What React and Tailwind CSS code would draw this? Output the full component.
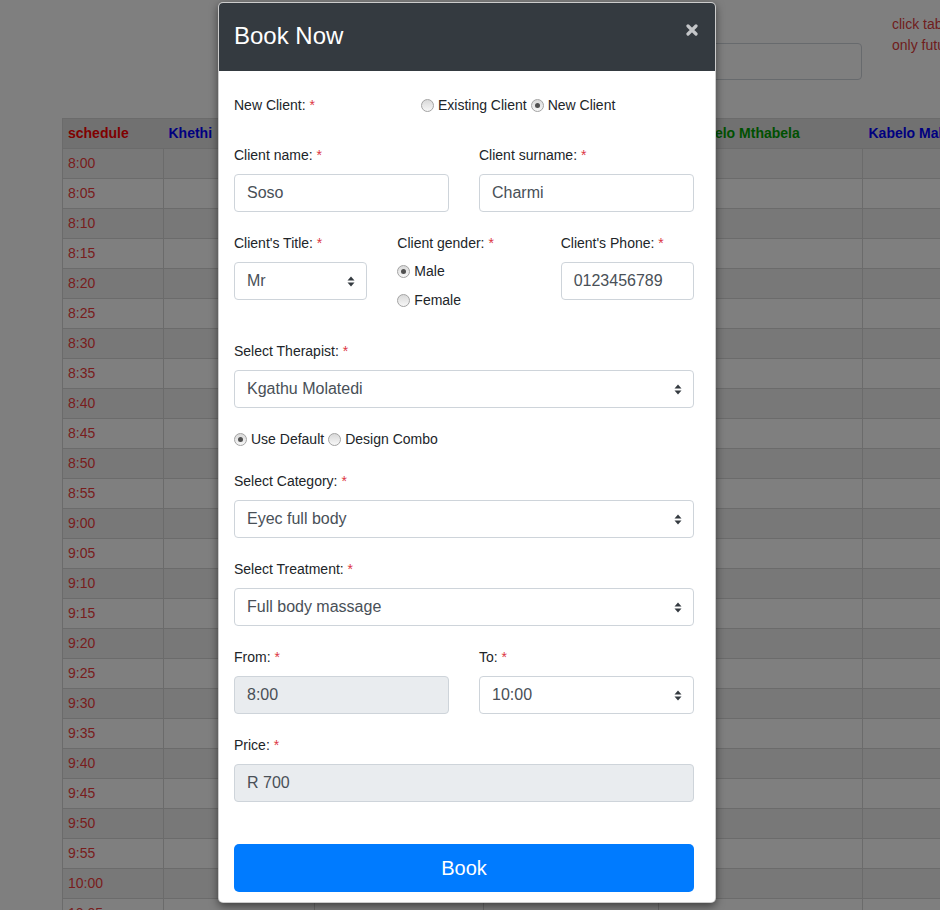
import React from "react";

const times = [];
for (let h = 8; h <= 10; h++) {
  for (let m = 0; m < 60; m += 5) {
    if (h === 10 && m > 5) break;
    times.push(`${h}:${m < 10 ? "0" + m : m}`);
  }
}

function Star() {
  return <span className="text-[#dc3545]"> *</span>;
}

function Label({ children }) {
  return (
    <div className="text-[14px] leading-[20px] text-[#212529]">
      {children}
      <Star />
    </div>
  );
}

function Radio({ checked }) {
  return (
    <span className="inline-flex w-[13px] h-[13px] shrink-0 items-center justify-center rounded-full border border-[#a3a3a3] bg-gradient-to-b from-[#d9d9d9] to-[#f7f7f7]">
      {checked && <span className="w-[5px] h-[5px] rounded-full bg-[#505050]" />}
    </span>
  );
}

function RadioItem({ checked, label, className = "" }) {
  return (
    <span className={`inline-flex items-center gap-[4px] text-[14px] leading-[20px] text-[#212529] ${className}`}>
      <Radio checked={checked} />
      {label}
    </span>
  );
}

function Arrows() {
  return (
    <svg width="8" height="11" viewBox="0 0 8 11" className="shrink-0">
      <path d="M4 0.5 L7.5 4.5 L0.5 4.5 Z" fill="#343a40" />
      <path d="M4 10.5 L7.5 6.5 L0.5 6.5 Z" fill="#343a40" />
    </svg>
  );
}

function Field({ value, disabled, select, className = "" }) {
  return (
    <div
      className={`flex items-center justify-between h-[38px] pl-[12px] pr-[11px] rounded-[4px] border border-[#ced4da] text-[16px] text-[#495057] ${
        disabled ? "bg-[#e9ecef]" : "bg-white"
      } ${className}`}
    >
      <span>{value}</span>
      {select && <Arrows />}
    </div>
  );
}

export default function App() {
  return (
    <div className="relative w-[940px] h-[910px] overflow-hidden bg-white font-['Liberation_Sans',Arial,sans-serif]">
      {/* page behind the modal */}
      <div className="flex pt-[43px]">
        <div className="ml-[540px] w-[322px] h-[37px] rounded-[4px] border border-[#ced4da] bg-white shrink-0" />
        <div className="ml-[30px] -mt-[29px] text-[14px] leading-[21px] text-[#e03c3c] whitespace-nowrap">
          click table cell to book
          <br />
          only future times
        </div>
      </div>
      <table className="ml-[62px] mt-[38px] border-collapse border border-[#d6d6d6] text-[14px] table-fixed w-[1100px]">
        <colgroup>
          <col className="w-[101px]" />
          <col className="w-[151px]" />
          <col className="w-[169px]" />
          <col className="w-[175px]" />
          <col className="w-[204px]" />
          <col className="w-[300px]" />
        </colgroup>
        <thead>
          <tr className="bg-[#e2e2e2] h-[30px] font-bold text-left">
            <th className="pl-[5px] text-[#ff0000]">schedule</th>
            <th className="pl-[5px] text-[#0000ff]">Khethi</th>
            <th className="pl-[5px] text-[#0000ff]">Lerato</th>
            <th className="pl-[5px] text-[#0000ff]">Kgathu Molatedi</th>
            <th className="pl-[30px] text-[#00a000] whitespace-nowrap">Kabelo Mthabela</th>
            <th className="pl-[6px] text-[#0000ff] whitespace-nowrap">Kabelo Makhura</th>
          </tr>
        </thead>
        <tbody>
          {times.map((t, i) => (
            <tr key={t} className={`h-[30px] ${i % 2 === 0 ? "bg-[#f1f1f1]" : "bg-white"}`}>
              <td className="pl-[5px] text-[#f03c3c] border border-[#d6d6d6]">{t}</td>
              <td className="border border-[#d6d6d6]" />
              <td className="border border-[#d6d6d6]" />
              <td className="border border-[#d6d6d6]" />
              <td className="border border-[#d6d6d6]" />
              <td className="border border-[#d6d6d6]" />
            </tr>
          ))}
        </tbody>
      </table>

      {/* backdrop */}
      <div className="absolute inset-0 bg-black/50" />

      {/* modal */}
      <div className="absolute left-[218px] top-[2px] w-[498px] h-[901px] rounded-[5px] bg-white border border-black/20 shadow-[0_3px_9px_rgba(0,0,0,0.5)] flex flex-col">
        <div className="flex items-center justify-between h-[68px] bg-[#343a40] rounded-t-[4px] pl-[15px] pr-[17px] shrink-0">
          <h4 className="text-[24px] leading-[28px] text-white -mt-[3px]">Book Now</h4>
          <svg width="12" height="12" viewBox="0 0 12 12" className="-mt-[14px]">
            <path d="M2 2 L10 10 M10 2 L2 10" stroke="#c4c6c9" strokeWidth="3.2" strokeLinecap="round" />
          </svg>
        </div>

        <div className="pl-[15px] pr-[21px] pt-[24px] flex flex-col">
          <div className="flex items-center">
            <Label>New Client:</Label>
            <div className="ml-[106px] flex items-center">
              <RadioItem label="Existing Client" />
              <RadioItem checked label="New Client" className="ml-[4px]" />
            </div>
          </div>

          <div className="grid grid-cols-2 gap-x-[30px] mt-[30px]">
            <div>
              <Label>Client name:</Label>
              <Field value="Soso" className="mt-[9px]" />
            </div>
            <div>
              <Label>Client surname:</Label>
              <Field value="Charmi" className="mt-[9px]" />
            </div>
          </div>

          <div className="grid grid-cols-3 gap-x-[30px] mt-[21px] items-start">
            <div>
              <Label>Client's Title:</Label>
              <Field value="Mr" select className="mt-[9px]" />
            </div>
            <div>
              <Label>Client gender:</Label>
              <div className="flex flex-col gap-[9px] mt-[8px]">
                <RadioItem checked label="Male" />
                <RadioItem label="Female" />
              </div>
            </div>
            <div>
              <Label>Client's Phone:</Label>
              <Field value="0123456789" className="mt-[9px]" />
            </div>
          </div>

          <div className="mt-[31px]">
            <Label>Select Therapist:</Label>
            <Field value="Kgathu Molatedi" select className="mt-[9px]" />
          </div>

          <div className="flex items-center mt-[21px]">
            <RadioItem checked label="Use Default" />
            <RadioItem label="Design Combo" className="ml-[4px]" />
          </div>

          <div className="mt-[22px]">
            <Label>Select Category:</Label>
            <Field value="Eyec full body" select className="mt-[9px]" />
          </div>

          <div className="mt-[21px]">
            <Label>Select Treatment:</Label>
            <Field value="Full body massage" select className="mt-[9px]" />
          </div>

          <div className="grid grid-cols-2 gap-x-[30px] mt-[21px]">
            <div>
              <Label>From:</Label>
              <Field value="8:00" disabled className="mt-[9px]" />
            </div>
            <div>
              <Label>To:</Label>
              <Field value="10:00" select className="mt-[9px]" />
            </div>
          </div>

          <div className="mt-[21px]">
            <Label>Price:</Label>
            <Field value="R 700" disabled className="mt-[9px]" />
          </div>

          <button className="mt-[42px] h-[48px] w-full rounded-[5px] bg-[#007bff] text-white text-[20px]">
            Book
          </button>
        </div>
      </div>
    </div>
  );
}
